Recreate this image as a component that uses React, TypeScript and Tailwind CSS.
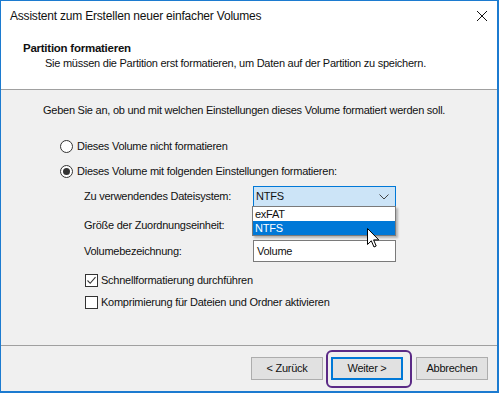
import React from 'react';

const font = { fontFamily: '"Liberation Sans", Arial, sans-serif' };

const Radio: React.FC<{ checked?: boolean; label: string }> = ({ checked, label }) => (
  <div className="flex items-center h-[20px]">
    <span className="w-[13px] h-[13px] rounded-full border border-[#333] bg-white flex items-center justify-center">
      {checked && <span className="w-[7px] h-[7px] rounded-full bg-[#333]" />}
    </span>
    <span className="ml-[4px]">{label}</span>
  </div>
);

const Check: React.FC<{ checked?: boolean; label: string }> = ({ checked, label }) => (
  <div className="flex items-center h-[20px]">
    <span className="w-[13px] h-[13px] border border-[#333] bg-white flex items-center justify-center">
      {checked && (
        <svg width="11" height="11" viewBox="0 0 11 11">
          <path d="M1.5 5.5 L4.2 8.3 L9.5 2.2" fill="none" stroke="#333" strokeWidth="1.1" />
        </svg>
      )}
    </span>
    <span className="ml-[3px]">{label}</span>
  </div>
);

const Button: React.FC<{ label: string; primary?: boolean }> = ({ label, primary }) => (
  <div
    className={
      'w-[72px] h-[23px] flex items-center justify-center bg-[#e1e1e1] ' +
      (primary ? 'border-2 border-[#0078d7]' : 'border border-[#adadad]')
    }
  >
    {label}
  </div>
);

export default function App() {
  return (
    <div
      className="w-[499px] h-[393px] bg-white text-[#111] text-[11px] tracking-[-0.25px] border-t border-l border-r-2 border-b-2 border-[#1c7bd0] flex flex-col overflow-hidden relative"
      style={font}
    >
      {/* title bar */}
      <div className="h-[29px] flex items-center justify-between pl-[9px] pr-[8px] text-[12px] tracking-[-0.2px]">
        <span>Assistent zum Erstellen neuer einfacher Volumes</span>
        <svg width="12" height="12" viewBox="0 0 12 12" className="mr-[1px]">
          <path d="M1 1 L11 11 M11 1 L1 11" stroke="#111" strokeWidth="1" />
        </svg>
      </div>

      {/* header */}
      <div className="h-[60px] border-b border-[#a0a0a0] pl-[22px] pt-[11px]">
        <div className="font-bold leading-[15px] text-[11.5px]">Partition formatieren</div>
        <div className="pl-[22px] leading-[15px]">
          Sie müssen die Partition erst formatieren, um Daten auf der Partition zu speichern.
        </div>
      </div>

      {/* body */}
      <div className="flex-1 bg-[#f0f0f0] pl-[42px] pt-[11px] relative">
        <div className="leading-[18px]">
          Geben Sie an, ob und mit welchen Einstellungen dieses Volume formatiert werden soll.
        </div>

        <div className="pl-[17px] mt-[17px]">
          <Radio label="Dieses Volume nicht formatieren" />
          <div className="mt-[5px]">
            <Radio checked label="Dieses Volume mit folgenden Einstellungen formatieren:" />
          </div>
        </div>

        <div className="pl-[41px] mt-[5px] flex flex-col">
          <div className="flex items-center">
            <span className="w-[169px]">Zu verwendendes Dateisystem:</span>
            <div className="w-[143px] h-[21px] border border-[#0078d7] bg-[#cce4f7] flex items-center justify-between pl-[2px] pr-[6px]">
              <span>NTFS</span>
              <svg width="10" height="6" viewBox="0 0 10 6">
                <path d="M0.5 0.5 L5 5 L9.5 0.5" fill="none" stroke="#444" strokeWidth="1" />
              </svg>
            </div>
          </div>
          <div className="flex items-center mt-[8px]">
            <span className="w-[169px]">Größe der Zuordnungseinheit:</span>
            <div className="w-[143px] h-[21px] border border-[#adadad] bg-[#e1e1e1]" />
          </div>
          <div className="flex items-center mt-[4px]">
            <span className="w-[169px]">Volumebezeichnung:</span>
            <div className="w-[143px] h-[22px] border border-[#7a7a7a] bg-white flex items-center pl-[3px]">Volume</div>
          </div>
        </div>

        <div className="pl-[42px] mt-[8px]">
          <Check checked label="Schnellformatierung durchführen" />
          <div className="mt-[2px]">
            <Check label="Komprimierung für Dateien und Ordner aktivieren" />
          </div>
        </div>

        {/* open dropdown list */}
        <div className="absolute left-[251px] top-[116px] w-[144px] bg-white border border-[#7a7a7a] shadow-[2px_2px_2px_rgba(0,0,0,0.25)] leading-[14px]">
          <div className="pl-[2px] h-[14px]">exFAT</div>
          <div className="pl-[2px] h-[14px] bg-[#0078d7] text-white">NTFS</div>
        </div>

        {/* mouse cursor */}
        <svg
          width="13"
          height="20"
          viewBox="0 0 13 20"
          className="absolute left-[366px] top-[138px]"
        >
          <path
            d="M0.5 0.5 L0.5 16.5 L4.3 12.8 L7 19 L9.2 18 L6.6 11.9 L11.8 11.9 Z"
            fill="#fff"
            stroke="#000"
            strokeWidth="1"
            strokeLinejoin="round"
          />
        </svg>
      </div>

      {/* footer */}
      <div className="h-[46px] bg-[#f0f0f0] border-t border-[#a0a0a0] flex items-start justify-end pt-[11px] pr-[9px] gap-[8px]">
        <Button label="< Zurück" />
        <div className="relative">
          <Button primary label="Weiter >" />
          <div className="absolute -left-[5px] -top-[7px] w-[86px] h-[38px] rounded-[6px] border-2 border-[#5b2a86]" />
        </div>
        <div className="ml-[5px]">
          <Button label="Abbrechen" />
        </div>
      </div>
    </div>
  );
}
